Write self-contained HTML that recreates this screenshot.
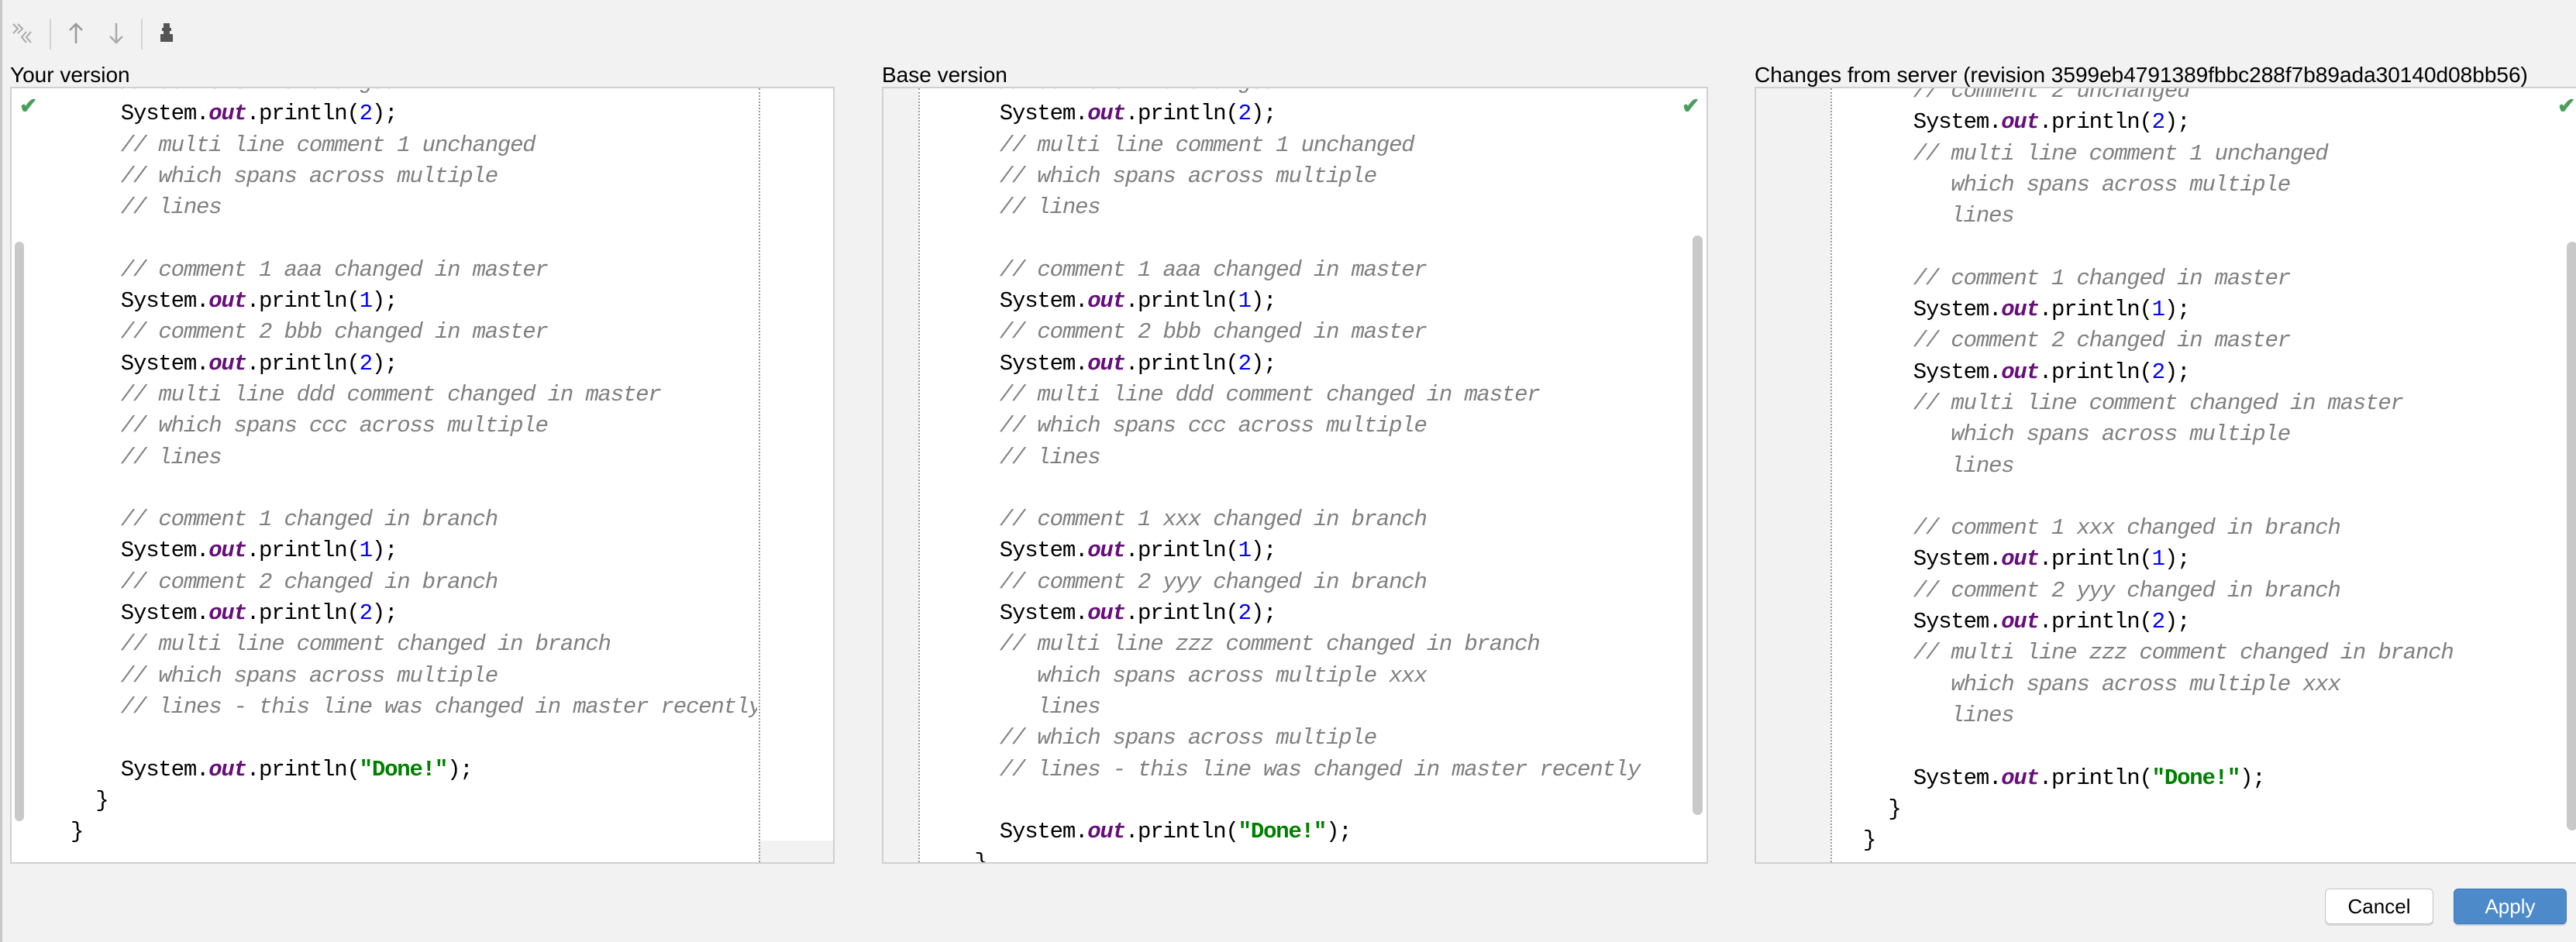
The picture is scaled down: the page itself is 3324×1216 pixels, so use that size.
<!DOCTYPE html>
<html><head><meta charset="utf-8"><style>
html,body{margin:0;padding:0}
body{width:3324px;height:1216px;background:#f2f2f2;position:relative;overflow:hidden;font-family:"Liberation Sans",sans-serif}
.lbl{position:absolute;top:81px;font-size:28px;color:#000;white-space:nowrap}
.panel{position:absolute;top:112px;height:999px;background:#fff;border:2px solid #d0d0d0;overflow:hidden}
.code{position:absolute;font-family:"Liberation Mono",monospace;font-size:29px;letter-spacing:-1.2px;line-height:40.3px;color:#000}
.code div{height:40.3px;white-space:pre}
.c{color:#808080;font-style:italic}
.o{color:#660e7a;font-style:italic;font-weight:bold}
.n{color:#0000ff}
.s{color:#008000;font-weight:bold}
.dot{position:absolute;top:0;bottom:0;width:0;border-left:2px dotted #9a9a9a}
.gut{position:absolute;top:0;bottom:0;left:0;background:#f2f2f2}
.sb{position:absolute;background:#c9c9c9;border-radius:7px}
.chk{position:absolute;top:6px;font-size:28px;color:#4a9e5c;font-weight:bold}
.btn{position:absolute;top:1147px;height:44px;border-radius:6px;font-size:26px;text-align:center;line-height:44px}
</style></head><body>
<div style="position:absolute;left:0;top:0;width:3px;height:1216px;background:#c8c8c8"></div>
<svg style="position:absolute;left:14px;top:28px" width="36" height="30" viewBox="0 0 36 30"><path d="M3 3l6 6-6 6M9 3l6 6-6 6M20 13l-6 7 6 7M26 13l-6 7 6 7" fill="none" stroke="#aaa" stroke-width="2"/></svg>
<div style="position:absolute;left:64px;top:24px;width:2px;height:40px;background:#d4d4d4"></div>
<svg style="position:absolute;left:86px;top:28px" width="24" height="30" viewBox="0 0 24 30"><path d="M12 28V3M4 11l8-8 8 8" fill="none" stroke="#999" stroke-width="2.5"/></svg>
<svg style="position:absolute;left:138px;top:28px" width="24" height="30" viewBox="0 0 24 30"><path d="M12 2v25M4 19l8 8 8-8" fill="none" stroke="#aaa" stroke-width="2.5"/></svg>
<div style="position:absolute;left:182px;top:24px;width:2px;height:40px;background:#d4d4d4"></div>
<svg style="position:absolute;left:203px;top:28px" width="24" height="28" viewBox="0 0 24 28"><path d="M8 2h8v6h2v4h-2v4h4v10H4V16h4v-4H6V8h2z" fill="#555"/></svg>

<div class="lbl" style="left:13px">Your version</div>
<div class="lbl" style="left:1138px">Base version</div>
<div class="lbl" style="left:2264px">Changes from server (revision 3599eb4791389fbbc288f7b89ada30140d08bb56)</div>

<div class="panel" style="left:13px;width:1060px">
<div style="position:absolute;left:964px;right:0;bottom:0;height:28px;background:#f2f2f2"></div>
<div class="dot" style="left:964px"></div>
<div class="chk" style="left:10px">✔</div>
<div class="sb" style="left:4px;top:198px;width:12px;height:748px"></div>
<div class="code" style="left:76px;top:-27px;width:886px;overflow:hidden"><div>    <span class="c">// comment 2 unchanged</span></div><div>    System.<span class="o">out</span>.println(<span class="n">2</span>);</div><div>    <span class="c">// multi line comment 1 unchanged</span></div><div>    <span class="c">// which spans across multiple</span></div><div>    <span class="c">// lines</span></div><div> </div><div>    <span class="c">// comment 1 aaa changed in master</span></div><div>    System.<span class="o">out</span>.println(<span class="n">1</span>);</div><div>    <span class="c">// comment 2 bbb changed in master</span></div><div>    System.<span class="o">out</span>.println(<span class="n">2</span>);</div><div>    <span class="c">// multi line ddd comment changed in master</span></div><div>    <span class="c">// which spans ccc across multiple</span></div><div>    <span class="c">// lines</span></div><div> </div><div>    <span class="c">// comment 1 changed in branch</span></div><div>    System.<span class="o">out</span>.println(<span class="n">1</span>);</div><div>    <span class="c">// comment 2 changed in branch</span></div><div>    System.<span class="o">out</span>.println(<span class="n">2</span>);</div><div>    <span class="c">// multi line comment changed in branch</span></div><div>    <span class="c">// which spans across multiple</span></div><div>    <span class="c">// lines - this line was changed in master recently</span></div><div> </div><div>    System.<span class="o">out</span>.println(<span class="s">"Done!"</span>);</div><div>  }</div><div>}</div></div>
</div>

<div class="panel" style="left:1138px;width:1062px">
<div class="gut" style="width:45px"></div>
<div class="dot" style="left:45px"></div>
<div class="chk" style="left:1030px">✔</div>
<div class="sb" style="left:1044px;top:190px;width:13px;height:748px"></div>
<div class="code" style="left:85px;top:-27px"><div>    <span class="c">// comment 2 unchanged</span></div><div>    System.<span class="o">out</span>.println(<span class="n">2</span>);</div><div>    <span class="c">// multi line comment 1 unchanged</span></div><div>    <span class="c">// which spans across multiple</span></div><div>    <span class="c">// lines</span></div><div> </div><div>    <span class="c">// comment 1 aaa changed in master</span></div><div>    System.<span class="o">out</span>.println(<span class="n">1</span>);</div><div>    <span class="c">// comment 2 bbb changed in master</span></div><div>    System.<span class="o">out</span>.println(<span class="n">2</span>);</div><div>    <span class="c">// multi line ddd comment changed in master</span></div><div>    <span class="c">// which spans ccc across multiple</span></div><div>    <span class="c">// lines</span></div><div> </div><div>    <span class="c">// comment 1 xxx changed in branch</span></div><div>    System.<span class="o">out</span>.println(<span class="n">1</span>);</div><div>    <span class="c">// comment 2 yyy changed in branch</span></div><div>    System.<span class="o">out</span>.println(<span class="n">2</span>);</div><div>    <span class="c">// multi line zzz comment changed in branch</span></div><div>    <span class="c">   which spans across multiple xxx</span></div><div>    <span class="c">   lines</span></div><div>    <span class="c">// which spans across multiple</span></div><div>    <span class="c">// lines - this line was changed in master recently</span></div><div> </div><div>    System.<span class="o">out</span>.println(<span class="s">"Done!"</span>);</div><div>  }</div></div>
</div>

<div class="panel" style="left:2264px;width:1062px">
<div class="gut" style="width:96px"></div>
<div class="dot" style="left:96px"></div>
<div class="chk" style="left:1034px">✔</div>
<div class="sb" style="left:1046px;top:198px;width:14px;height:760px"></div>
<div class="code" style="left:138px;top:-16px"><div>    <span class="c">// comment 2 unchanged</span></div><div>    System.<span class="o">out</span>.println(<span class="n">2</span>);</div><div>    <span class="c">// multi line comment 1 unchanged</span></div><div>    <span class="c">   which spans across multiple</span></div><div>    <span class="c">   lines</span></div><div> </div><div>    <span class="c">// comment 1 changed in master</span></div><div>    System.<span class="o">out</span>.println(<span class="n">1</span>);</div><div>    <span class="c">// comment 2 changed in master</span></div><div>    System.<span class="o">out</span>.println(<span class="n">2</span>);</div><div>    <span class="c">// multi line comment changed in master</span></div><div>    <span class="c">   which spans across multiple</span></div><div>    <span class="c">   lines</span></div><div> </div><div>    <span class="c">// comment 1 xxx changed in branch</span></div><div>    System.<span class="o">out</span>.println(<span class="n">1</span>);</div><div>    <span class="c">// comment 2 yyy changed in branch</span></div><div>    System.<span class="o">out</span>.println(<span class="n">2</span>);</div><div>    <span class="c">// multi line zzz comment changed in branch</span></div><div>    <span class="c">   which spans across multiple xxx</span></div><div>    <span class="c">   lines</span></div><div> </div><div>    System.<span class="o">out</span>.println(<span class="s">"Done!"</span>);</div><div>  }</div><div>}</div></div>
</div>

<div class="btn" style="left:3000px;width:138px;background:#fff;border:1px solid #c4c4c4;color:#000;box-shadow:0 2px 0 #d8d8d8">Cancel</div>
<div class="btn" style="left:3166px;width:144px;background:#4d8ac9;border:1px solid #3f78b4;color:#fff;box-shadow:0 2px 0 #c0cfe0">Apply</div>
</body></html>
